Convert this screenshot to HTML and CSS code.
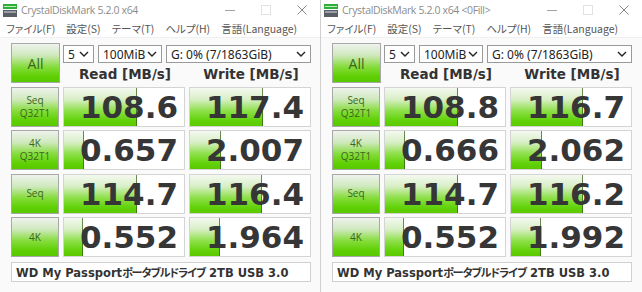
FILE: index.html
```html
<!DOCTYPE html>
<html lang="ja">
<head>
  <meta charset="UTF-8">
  <title>CrystalDiskMark</title>
  <link rel="stylesheet" href="styles.css">
</head>
<body>
  <div class="screen">
    <div class="window">
      <div class="titlebar">
        <svg class="app-icon" width="14" height="13" viewBox="0 0 14 13">
          <rect x="0" y="0" width="14" height="5" fill="#2fae3a"/>
          <rect x="1" y="2" width="12" height="1" fill="#bff0c0"/>
          <rect x="0" y="6" width="14" height="7" fill="#5a5f66"/>
          <rect x="1" y="7" width="12" height="2" fill="#9aa0a8"/>
        </svg>
        <span class="title">CrystalDiskMark 5.2.0 x64</span>
        <div class="controls">
          <span class="ctl-min"></span>
          <span class="ctl-max"></span>
          <svg class="ctl-close" width="10" height="10" viewBox="0 0 10 10"><path d="M0.5 0.5 L9.5 9.5 M9.5 0.5 L0.5 9.5" stroke="#8a8a8a" stroke-width="1"/></svg>
        </div>
      </div>
      <div class="menubar">
        <span>ファイル(F)</span>
        <span>設定(S)</span>
        <span>テーマ(T)</span>
        <span>ヘルプ(H)</span>
        <span>言語(Language)</span>
      </div>
      <div class="panel">
        <div class="toprow">
          <div class="btn btn-all">All</div>
          <div class="settings">
            <div class="selects">
              <div class="select sel-count">5<svg viewBox="0 0 10 6"><path d="M1 1 L5 5 L9 1" fill="none" stroke="#222" stroke-width="1.4"/></svg></div>
              <div class="select sel-size">100MiB<svg viewBox="0 0 10 6"><path d="M1 1 L5 5 L9 1" fill="none" stroke="#222" stroke-width="1.4"/></svg></div>
              <div class="select sel-drive">G: 0% (7/1863GiB)<svg viewBox="0 0 10 6"><path d="M1 1 L5 5 L9 1" fill="none" stroke="#222" stroke-width="1.4"/></svg></div>
            </div>
            <div class="heads">
              <span>Read [MB/s]</span>
              <span>Write [MB/s]</span>
            </div>
          </div>
        </div>
        <div class="row">
          <div class="btn btn-label">Seq<br>Q32T1</div>
          <div class="cell" style="--w:61%">108.6</div>
          <div class="cell" style="--w:61%">117.4</div>
        </div>
        <div class="row">
          <div class="btn btn-label">4K<br>Q32T1</div>
          <div class="cell" style="--w:17%">0.657</div>
          <div class="cell" style="--w:26%">2.007</div>
        </div>
        <div class="row">
          <div class="btn btn-label">Seq</div>
          <div class="cell" style="--w:61%">114.7</div>
          <div class="cell" style="--w:60%">116.4</div>
        </div>
        <div class="row">
          <div class="btn btn-label">4K</div>
          <div class="cell" style="--w:16%">0.552</div>
          <div class="cell" style="--w:25%">1.964</div>
        </div>
        <div class="drive">WD My Passport<span class="jp">ポータブルドライブ</span> 2TB USB 3.0</div>
      </div>
    </div>

    <div class="window">
      <div class="titlebar">
        <svg class="app-icon" width="14" height="13" viewBox="0 0 14 13">
          <rect x="0" y="0" width="14" height="5" fill="#2fae3a"/>
          <rect x="1" y="2" width="12" height="1" fill="#bff0c0"/>
          <rect x="0" y="6" width="14" height="7" fill="#5a5f66"/>
          <rect x="1" y="7" width="12" height="2" fill="#9aa0a8"/>
        </svg>
        <span class="title">CrystalDiskMark 5.2.0 x64 &lt;0Fill&gt;</span>
        <div class="controls">
          <span class="ctl-min"></span>
          <span class="ctl-max"></span>
          <svg class="ctl-close" width="10" height="10" viewBox="0 0 10 10"><path d="M0.5 0.5 L9.5 9.5 M9.5 0.5 L0.5 9.5" stroke="#8a8a8a" stroke-width="1"/></svg>
        </div>
      </div>
      <div class="menubar">
        <span>ファイル(F)</span>
        <span>設定(S)</span>
        <span>テーマ(T)</span>
        <span>ヘルプ(H)</span>
        <span>言語(Language)</span>
      </div>
      <div class="panel">
        <div class="toprow">
          <div class="btn btn-all">All</div>
          <div class="settings">
            <div class="selects">
              <div class="select sel-count">5<svg viewBox="0 0 10 6"><path d="M1 1 L5 5 L9 1" fill="none" stroke="#222" stroke-width="1.4"/></svg></div>
              <div class="select sel-size">100MiB<svg viewBox="0 0 10 6"><path d="M1 1 L5 5 L9 1" fill="none" stroke="#222" stroke-width="1.4"/></svg></div>
              <div class="select sel-drive">G: 0% (7/1863GiB)<svg viewBox="0 0 10 6"><path d="M1 1 L5 5 L9 1" fill="none" stroke="#222" stroke-width="1.4"/></svg></div>
            </div>
            <div class="heads">
              <span>Read [MB/s]</span>
              <span>Write [MB/s]</span>
            </div>
          </div>
        </div>
        <div class="row">
          <div class="btn btn-label">Seq<br>Q32T1</div>
          <div class="cell" style="--w:61%">108.8</div>
          <div class="cell" style="--w:60%">116.7</div>
        </div>
        <div class="row">
          <div class="btn btn-label">4K<br>Q32T1</div>
          <div class="cell" style="--w:17%">0.666</div>
          <div class="cell" style="--w:26%">2.062</div>
        </div>
        <div class="row">
          <div class="btn btn-label">Seq</div>
          <div class="cell" style="--w:61%">114.7</div>
          <div class="cell" style="--w:60%">116.2</div>
        </div>
        <div class="row">
          <div class="btn btn-label">4K</div>
          <div class="cell" style="--w:16%">0.552</div>
          <div class="cell" style="--w:25%">1.992</div>
        </div>
        <div class="drive">WD My Passport<span class="jp">ポータブルドライブ</span> 2TB USB 3.0</div>
      </div>
    </div>
  </div>
</body>
</html>
```

FILE: styles.css
```css
body {
  margin: 0;
  background: #fafafa;
  font-family: "Noto Sans", "Noto Sans CJK JP", sans-serif;
}
.screen {
  display: flex;
  width: 642px;
  height: 292px;
  overflow: hidden;
}
.window {
  width: 321px;
  height: 292px;
  background: #fafafa;
  flex: none;
}
.window:first-child {
  border-right: 1px solid #cfcfcf;
  width: 320px;
}
.titlebar {
  height: 20px;
  display: flex;
  align-items: center;
  background: #fff;
  padding-left: 3px;
}
.app-icon {
  flex: none;
  margin-right: 4px;
}
.title {
  font-family: "Open Sans", sans-serif;
  font-size: 10.5px;
  letter-spacing: -0.35px;
  color: #8c8c8c;
}
.controls {
  margin-left: auto;
  display: flex;
  align-items: center;
  height: 20px;
}
.ctl-min {
  width: 10px;
  height: 1px;
  background: #a0a0a0;
  margin-right: 26px;
}
.ctl-max {
  width: 8px;
  height: 8px;
  border: 1px solid #e2e2e2;
  margin-right: 26px;
}
.ctl-close {
  margin-right: 13px;
}
.menubar {
  height: 17px;
  display: flex;
  align-items: center;
  gap: 11px;
  padding-left: 6px;
  background: #fff;
  border-bottom: 1px solid #f0f0f0;
  font-family: "Noto Sans CJK JP", sans-serif;
  font-feature-settings: "palt";
  font-size: 10.5px;
  color: #555;
}
.panel {
  padding: 5px 0 0 11px;
}
.toprow {
  display: flex;
  gap: 3px;
  height: 40px;
}
.btn {
  box-sizing: border-box;
  width: 49px;
  border: 1px solid #a8a8a8;
  background: linear-gradient(to bottom, #eef2ec 0%, #cfe9bd 30%, #86dc3c 60%, #5fd004 85%, #58c800 100%);
  color: #3a6620;
  display: flex;
  align-items: center;
  justify-content: center;
  text-align: center;
  flex: none;
}
.btn-all {
  height: 40px;
  font-family: "Open Sans", sans-serif;
  font-size: 14px;
}
.settings {
  display: flex;
  flex-direction: column;
}
.selects {
  display: flex;
  gap: 4px;
  margin-top: 2px;
}
.select {
  box-sizing: border-box;
  height: 18px;
  border: 1px solid #9a9a9a;
  background: #fff;
  display: flex;
  align-items: center;
  padding-left: 4px;
  font-family: "Noto Sans", sans-serif;
  font-size: 12px;
  color: #222;
}
.select svg {
  width: 10px;
  height: 6px;
  margin-left: auto;
  margin-right: 4px;
}
.sel-count { width: 31px; }
.sel-size { width: 64px; }
.sel-drive { width: 145px; }
.heads {
  display: flex;
  margin-top: 3px;
  font-family: "DejaVu Sans", sans-serif;
  font-weight: bold;
  font-size: 13.5px;
  color: #333;
}
.heads span {
  width: 124px;
  text-align: center;
}
.heads span + span {
  margin-left: 2px;
}
.row {
  display: flex;
  gap: 4px;
  height: 40px;
  margin-top: 3.5px;
}
.row:first-of-type {
  margin-top: 2px;
}
.btn-label {
  height: 40px;
  font-family: "Open Sans", sans-serif;
  font-size: 10px;
  line-height: 13px;
  width: 48px;
}
.cell {
  box-sizing: border-box;
  width: 122px;
  height: 40px;
  border: 1px solid #d4d4d4;
  background-color: #fff;
  background-image:
    linear-gradient(to left, rgba(50, 90, 20, 0.7) 1px, transparent 1px),
    linear-gradient(to bottom, #f4f9f0 0%, #d8efc6 30%, #8ee04a 60%, #62d20a 85%, #5cc800 100%);
  background-size: var(--w) 100%, var(--w) 100%;
  background-repeat: no-repeat;
  font-family: "DejaVu Sans", sans-serif;
  font-weight: bold;
  font-size: 31px;
  color: #363636;
  display: flex;
  align-items: center;
  justify-content: flex-end;
  padding-right: 6px;
  flex: none;
}
.drive {
  box-sizing: border-box;
  width: 300px;
  height: 20px;
  margin-top: 5px;
  border: 1px solid #d0d0d0;
  background: #fff;
  padding-left: 4px;
  line-height: 18px;
  font-family: "DejaVu Sans", sans-serif;
  font-weight: bold;
  font-size: 11.5px;
  color: #333;
  white-space: nowrap;
}
.drive .jp {
  font-family: "Noto Sans CJK JP", sans-serif;
  font-feature-settings: "palt";
  font-size: 11px;
  letter-spacing: -1px;
}
```
